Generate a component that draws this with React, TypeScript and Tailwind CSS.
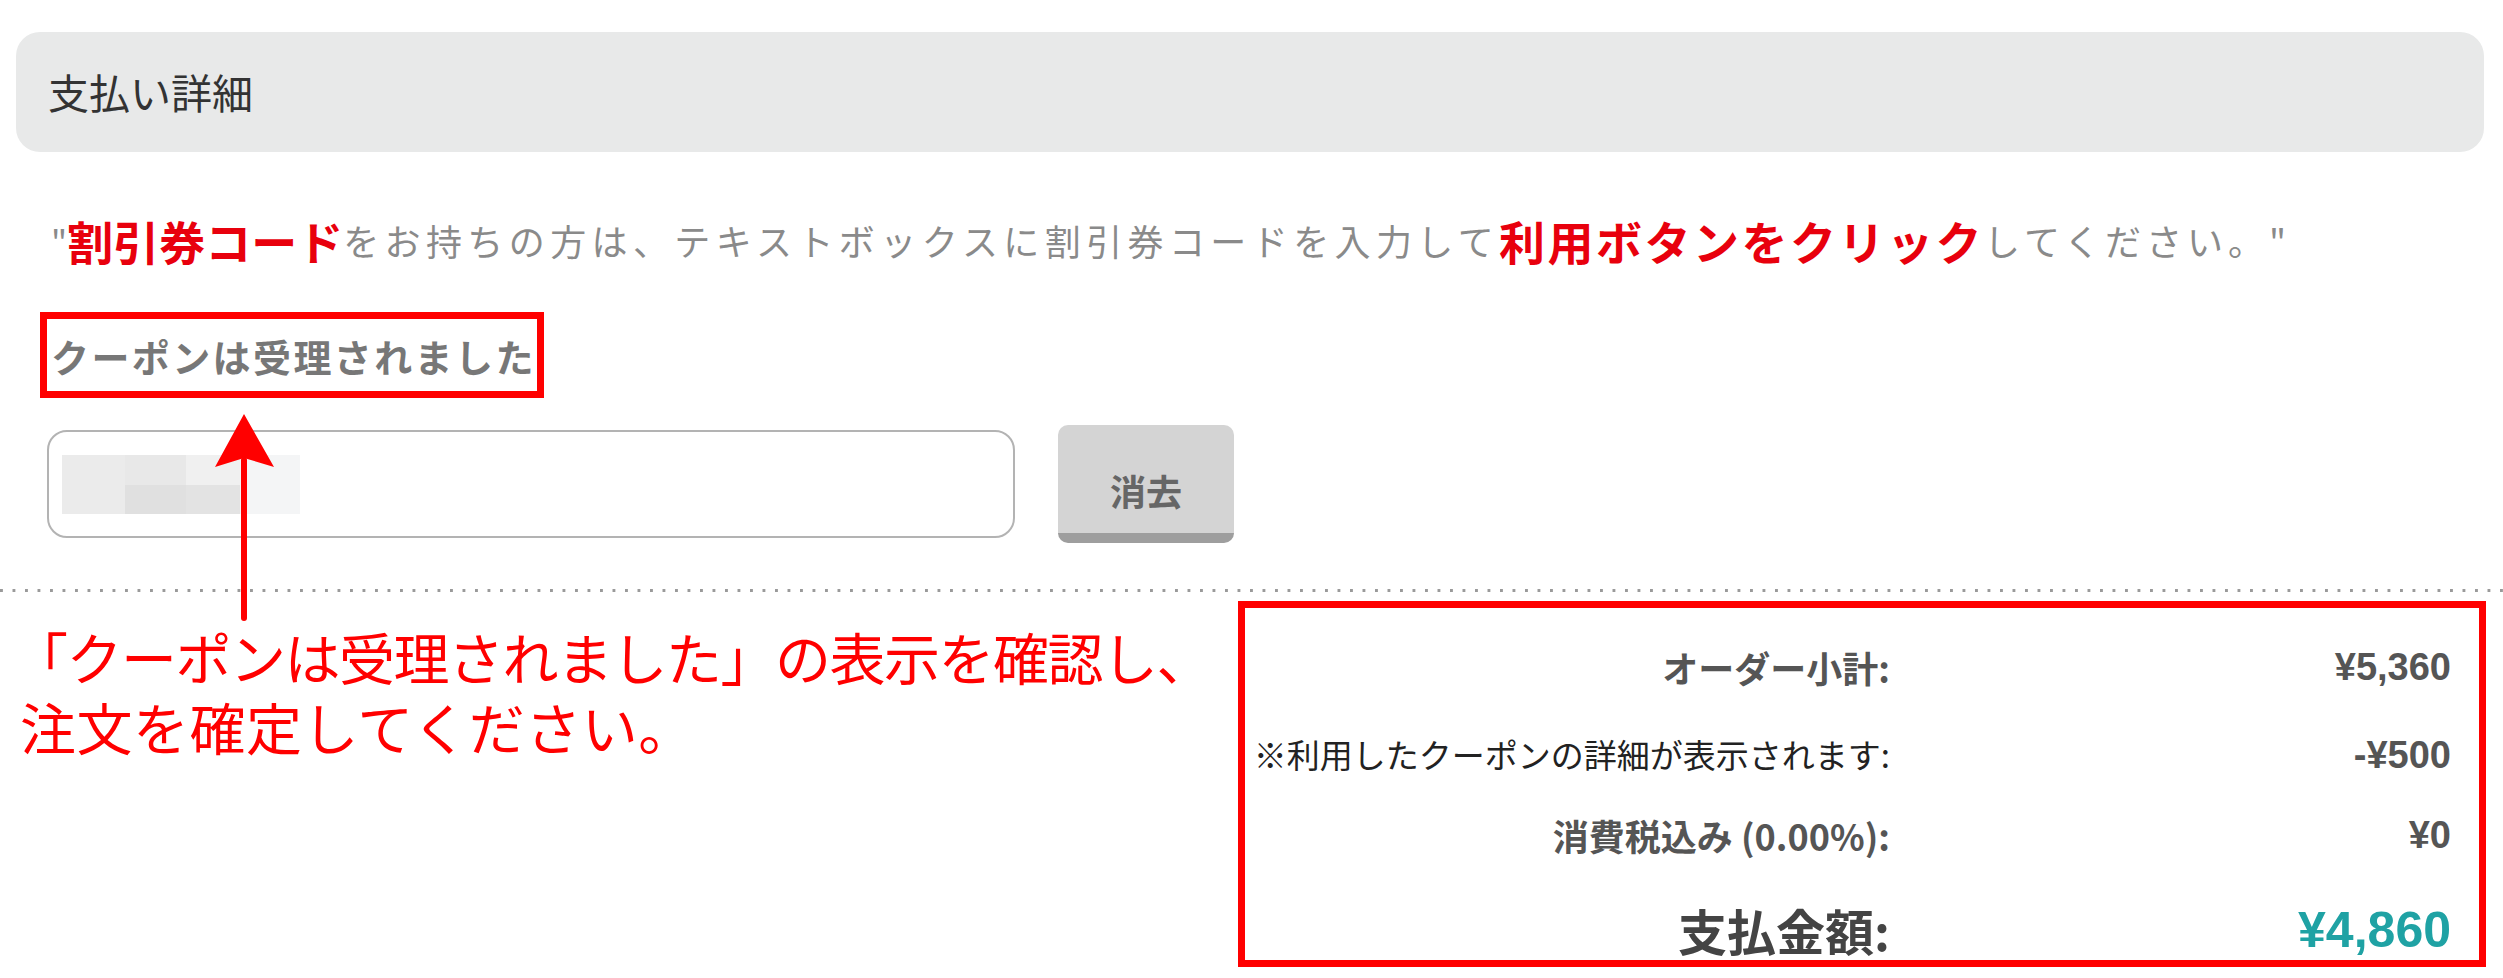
import React from "react"

function Arrow() {
  return (
    <svg className="absolute left-[210px] top-[410px]" width="70" height="215" viewBox="0 0 70 215">
      <path d="M34 4 L64 57 L34 48 L5 57 Z" fill="#ff0000" />
      <line x1="34" y1="50" x2="34" y2="208" stroke="#ff0000" strokeWidth="6" strokeLinecap="round" />
    </svg>
  )
}

function Row({ label, value, h, labelCls, valueCls, end }: { label: string; value: string; h: string; labelCls: string; valueCls: string; end?: boolean }) {
  return (
    <div className={`grid grid-cols-[645px_1fr] ${h} ${end ? "items-end" : "items-center"}`}>
      <div className={`text-right whitespace-nowrap ${labelCls}`}>{label}</div>
      <div className={`text-right pr-[28px] font-['Liberation_Sans',sans-serif] font-bold ${valueCls}`}>{value}</div>
    </div>
  )
}

export default function App() {
  return (
    <div className="relative w-[2503px] h-[978px] overflow-hidden bg-white font-['Noto_Sans_CJK_JP',sans-serif]">
      <div className="pt-[32px] pl-[16px] pr-[19px]">
        <div className="h-[120px] rounded-[24px] bg-[#e8e9e9] flex items-center pl-[32px] text-[41px] text-[#333]">
          支払い詳細
        </div>
      </div>

      {/* info line */}
      <div className="mt-[58px] pl-[51px] h-[60px] flex items-center whitespace-nowrap">
        <span className="text-[34px] text-[#8a8a8a]">"</span>
        <span className="text-[46px] tracking-[0px] font-bold text-[#e8000d]">割引券コード</span>
        <span className="text-[36px] tracking-[5.4px] text-[#8a8a8a]">をお持ちの方は、テキストボックスに割引券コードを入力して</span>
        <span className="text-[46px] tracking-[2.5px] font-bold text-[#e8000d]">利用ボタンをクリック</span>
        <span className="text-[36px] tracking-[5px] text-[#8a8a8a]">してください。"</span>
      </div>

      {/* status */}
      <div className="mt-[42px] ml-[40px] w-[504px] h-[86px] border-[7px] border-[#ff0000] flex items-center pl-[4px]">
        <span className="text-[38px] tracking-[2.4px] font-bold text-[#777]">クーポンは受理されました</span>
      </div>

      {/* input row */}
      <div className="mt-[27px] h-[118px] flex items-center">
        <div className="ml-[47px] w-[968px] h-[108px] rounded-[20px] border-2 border-[#b3b3b3] bg-white flex items-center pl-[13px]">
          <div className="flex h-[59px]">
            <div className="w-[63px] bg-[#ebebeb]" />
            <div className="w-[61px] flex flex-col">
              <div className="h-[30px] bg-[#e8e8e8]" />
              <div className="flex-1 bg-[#e0e0e0]" />
            </div>
            <div className="w-[54px] flex flex-col">
              <div className="h-[30px] bg-[#f0f0f0]" />
              <div className="flex-1 bg-[#e3e3e3]" />
            </div>
            <div className="w-[60px] bg-[#f4f5f6]" />
          </div>
        </div>
        <button className="ml-[43px] w-[176px] h-[118px] rounded-[10px] bg-[#d4d4d4] border-b-[10px] border-[#9e9e9e] flex items-center justify-center pt-[22px] text-[36px] font-bold text-[#666]">
          消去
        </button>
      </div>

      {/* dotted separator */}
      <div className="mt-[46px] h-[3px] w-full bg-[linear-gradient(to_right,#9a9a9a_3px,transparent_3px)] bg-[length:12.5px_3px]" />

      <div className="mt-[9px] flex">
        <div className="pl-[12px] pt-[20px] text-[56px] leading-[70px] tracking-[-1.5px] text-[#ff0000] whitespace-nowrap">
          <div>「クーポンは受理されました」の表示を確認し、</div>
          <div className="ml-[8px] tracking-[0.5px]">注文を確定してください。</div>
        </div>
        <div className="ml-auto mr-[17px] w-[1248px] h-[366px] border-[7px] border-[#ff0000] pt-[15px] flex flex-col">
          <Row label="オーダー小計:" value="¥5,360" h="h-[88px]" labelCls="text-[36px] font-bold text-[#555]" valueCls="text-[38px] text-[#555]" />
          <Row label="※利用したクーポンの詳細が表示されます:" value="-¥500" h="h-[88px]" labelCls="text-[33px] text-[#222]" valueCls="text-[38px] text-[#555]" />
          <Row label="消費税込み (0.00%):" value="¥0" h="h-[72px]" labelCls="text-[36px] font-bold text-[#555]" valueCls="text-[38px] text-[#555]" />
          <Row label="支払金額:" value="¥4,860" h="h-[89px]" end labelCls="text-[49px] leading-[60px] font-bold text-[#444]" valueCls="text-[50px] leading-[60px] text-[#1fa2a4]" />
        </div>
      </div>

      <Arrow />
    </div>
  )
}
